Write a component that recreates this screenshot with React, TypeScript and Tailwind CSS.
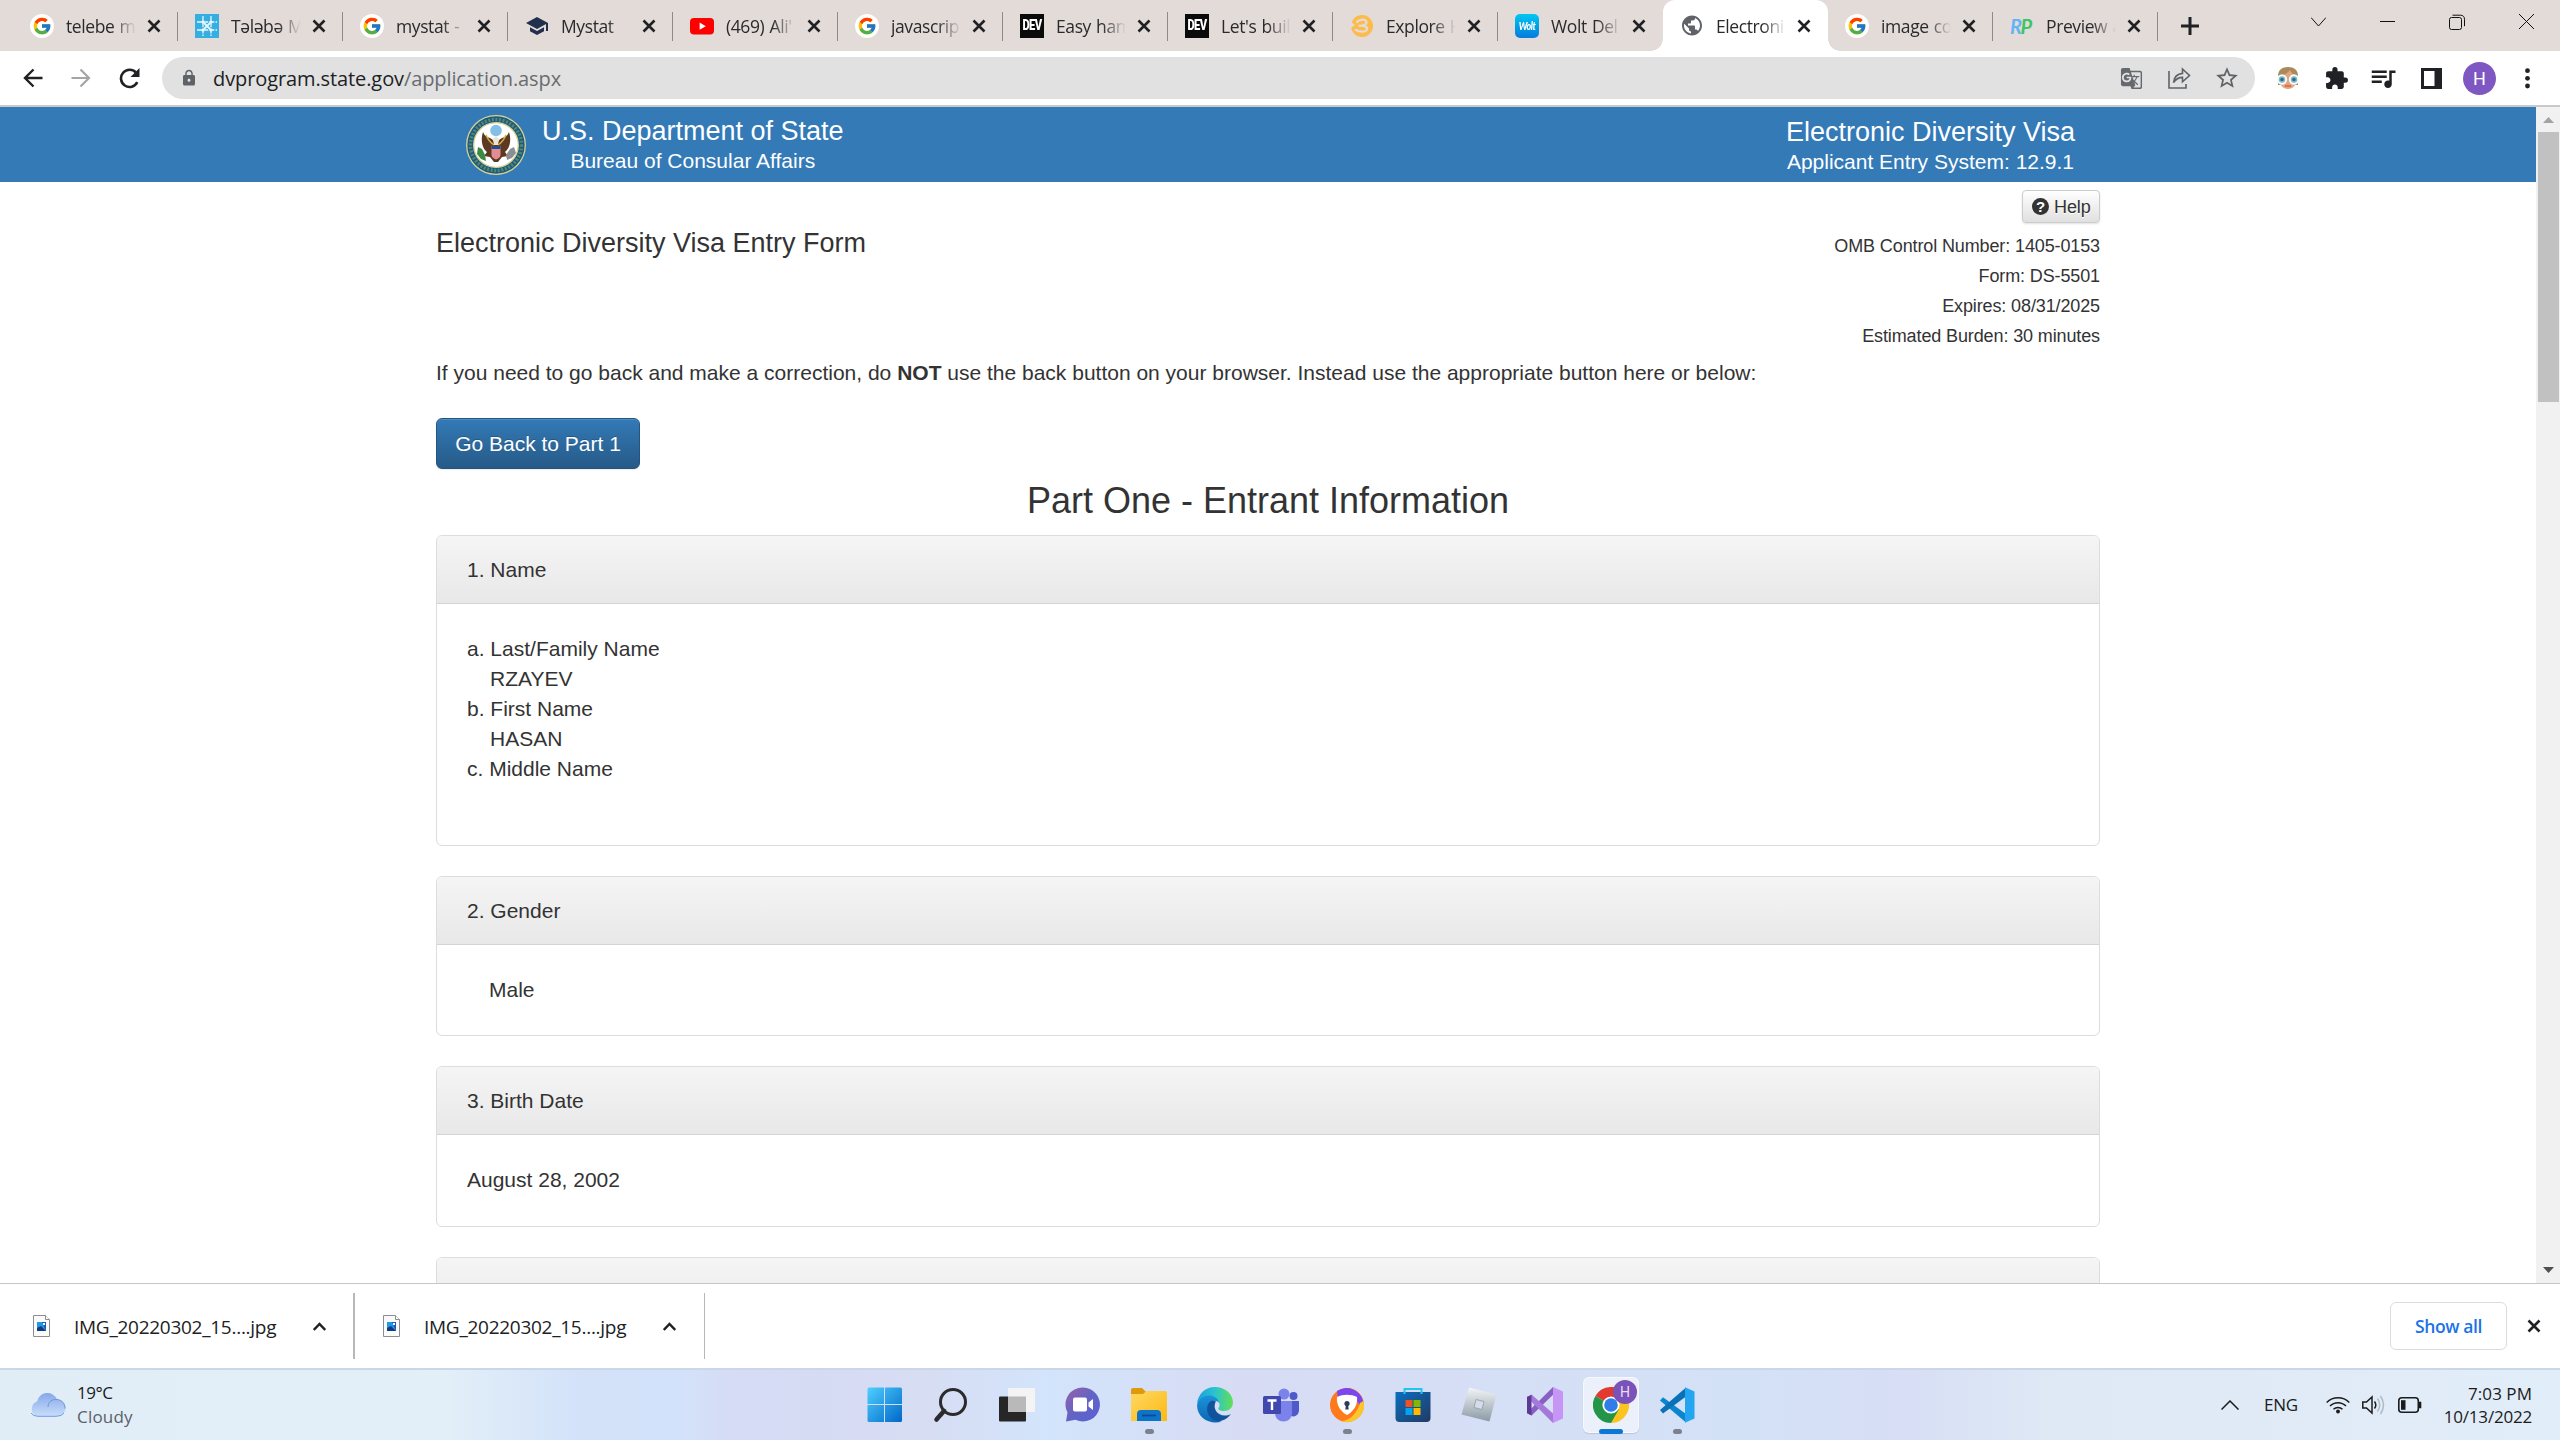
import React from "react";
import { FcGoogle } from "react-icons/fc";
import {
  MdExtension,
  MdGTranslate,
  MdLock,
  MdPublic,
  MdQueueMusic,
  MdSchool,
  MdStarBorder,
} from "react-icons/md";

const UI = "font-['Open_Sans','Noto_Sans',sans-serif]";
const ARIAL = "font-['Liberation_Sans',Arial,sans-serif]";

/* ---------- favicons ---------- */

const GoogleFav = () => (
  <span className="flex size-6 items-center justify-center rounded-full bg-white">
    <FcGoogle size={20} />
  </span>
);

const StudentFav = () => (
  <svg viewBox="0 0 24 24" className="size-6">
    <rect width="24" height="24" fill="#35aee2" />
    <g stroke="#e8f7fd" strokeWidth="1.3" fill="none">
      <path d="M8 2v20M16 2v20M2 8h20M2 16h20" strokeDasharray="5 1.2" />
      <path d="M9 9l6 6M15 9l-6 6" strokeWidth="1.8" />
    </g>
    <g fill="#e8f7fd">
      <circle cx="8" cy="8" r="1.6" />
      <circle cx="16" cy="8" r="1.6" />
      <circle cx="8" cy="16" r="1.6" />
      <circle cx="16" cy="16" r="1.6" />
    </g>
  </svg>
);

const YoutubeFav = () => (
  <svg viewBox="0 0 24 24" className="size-6">
    <rect y="4" width="24" height="16.5" rx="4" fill="#f00" />
    <path d="M9.6 8.6v7.2l6.2-3.6z" fill="#fff" />
  </svg>
);

const DevFav = () => (
  <span className="flex size-6 items-center justify-center bg-[#0a0a0a] font-['Roboto',sans-serif] text-[13px] font-black leading-6 tracking-[-0.8px] text-white">
    <span className="scale-x-[0.86] scale-y-110">DEV</span>
  </span>
);

const ExploreFav = () => (
  <svg viewBox="0 0 24 24" className="size-6">
    <circle cx="12" cy="12" r="11" fill="#fdbb4b" />
    <path
      d="M7 8c3-3.500 9-3 9.500 0 .3 2.500-3 3.800-8 3.800 6-.3 9 .7 8.500 3.400-.8 3-7 3.300-11.500.6"
      fill="none"
      stroke="#e3dbd8"
      strokeWidth="2.200"
      strokeLinecap="round"
    />
    <path d="M0 7l5 4-4 3z" fill="#e3dbd8" />
  </svg>
);

const WoltFav = () => (
  <span className="flex size-6 items-center justify-center rounded-[5px] bg-linear-to-b from-[#00c8f0] to-[#0a7bdc] font-['Lato',sans-serif] text-[9px] font-black italic leading-6 tracking-[-0.5px] text-white">
    <span className="scale-y-125">Wolt</span>
  </span>
);

const RpFav = () => (
  <span className="flex h-6 w-6 items-center font-['Lato',sans-serif] text-[20px] font-bold italic leading-6 tracking-[-1.5px]">
    <span className="text-[#62b4f5]">R</span>
    <span className="text-[#3cc468]">P</span>
  </span>
);

/* ---------- browser chrome ---------- */

const X = ({ s = 14, w = 2.6 }: { s?: number; w?: number }) => (
  <svg width={s} height={s} viewBox="0 0 14 14" className="shrink-0">
    <path d="M1.500 1.500l11 11M12.500 1.500l-11 11" stroke="#202124" strokeWidth={w} />
  </svg>
);

type TabData = { title: string; icon: React.ReactNode; active?: boolean; noSep?: boolean };

const tabs: TabData[] = [
  { title: "telebe m", icon: <GoogleFav /> },
  { title: "Tələbə M", icon: <StudentFav /> },
  { title: "mystat -", icon: <GoogleFav /> },
  { title: "Mystat", icon: <MdSchool size={24} color="#22304e" /> },
  { title: "(469) Ali'", icon: <YoutubeFav /> },
  { title: "javascrip", icon: <GoogleFav /> },
  { title: "Easy ham", icon: <DevFav /> },
  { title: "Let's buil", icon: <DevFav /> },
  { title: "Explore H", icon: <ExploreFav /> },
  { title: "Wolt Del", icon: <WoltFav />, noSep: true },
  { title: "Electroni", icon: <MdPublic size={25} color="#5f6368" />, active: true, noSep: true },
  { title: "image co", icon: <GoogleFav /> },
  { title: "Preview a", icon: <RpFav /> },
];

const Tab = ({ title, icon, active, noSep }: TabData) => (
  <div
    className={
      "relative flex h-[51px] w-[165px] shrink-0 items-center pl-[17px] pr-[17px] " +
      (active ? "rounded-t-[12px] bg-white" : "")
    }
  >
    {active && (
      <>
        <span className="absolute -left-3 bottom-0 size-3 bg-[radial-gradient(circle_at_0_0,transparent_11.5px,white_12px)]" />
        <span className="absolute -right-3 bottom-0 size-3 bg-[radial-gradient(circle_at_100%_0,transparent_11.5px,white_12px)]" />
      </>
    )}
    <span className="flex size-6 shrink-0 items-center justify-center">{icon}</span>
    <span className="ml-3 w-[70px] shrink-0 whitespace-nowrap text-[17.5px] leading-6 tracking-[-0.4px] text-[#2a2a2c] [mask-image:linear-gradient(to_right,black_66%,transparent_100%)] [word-spacing:1px]">
      {title}
    </span>
    <span className="ml-auto flex">
      <X />
    </span>
    {!noSep && <span className="absolute right-0 top-3 h-[29px] w-px bg-[#8e8a88]" />}
  </div>
);

const TabStrip = () => (
  <div className="flex h-[51px] w-full shrink-0 bg-[#e3dbd8] pl-[13px]">
    {tabs.map((t, i) => (
      <Tab key={i} {...t} />
    ))}
    <div className="flex w-16 items-center justify-center">
      <svg width="18" height="18" viewBox="0 0 18 18">
        <path d="M9 0v18M0 9h18" stroke="#202124" strokeWidth="3" />
      </svg>
    </div>
    <div className="ml-auto flex h-[43px] items-center gap-[54px] pr-[26px]">
      <svg width="15" height="10" viewBox="0 0 15 10" fill="none" stroke="#111">
        <path d="M0 .5l7.500 8.500L15 .5" />
      </svg>
      <svg width="15" height="1" viewBox="0 0 15 1">
        <path d="M0 .5h15" stroke="#111" />
      </svg>
      <svg width="16" height="16" viewBox="0 0 16 16" fill="none" stroke="#111">
        <rect x=".5" y="3.500" width="12" height="12" rx="2" />
        <path d="M3.500 1.200h8c2.500 0 4 1.500 4 4v7" />
      </svg>
      <svg width="15" height="15" viewBox="0 0 15 15" stroke="#111">
        <path d="M0 0l15 15M15 0L0 15" />
      </svg>
    </div>
  </div>
);

const ShareIcon = () => (
  <svg width="23" height="22" viewBox="0 0 23 22" fill="none" stroke="#5f6368" strokeWidth="1.600">
    <path d="M1 4v17h17v-4" />
    <path d="M5.500 15.500c.6-5 3.500-8.600 9-9.100V2l7 6.500-7 6.300v-4.400c-4 0-6.500 1.600-9 5.100z" />
  </svg>
);

const Glasses = () => (
  <svg width="24" height="22" viewBox="0 0 24 22">
    <path d="M2 9C2 3 6 0 12 0s10 3 10 9v9H2z" fill="#a98a5c" />
    <path d="M4 9c4-1 8-3 10-6 1 3 4 5 6 6v5c0 5-4 8-8 8s-8-3-8-8z" fill="#e8a27a" />
    <circle cx="6" cy="12.500" r="4.200" fill="#7cb8c4" stroke="#f2fbff" strokeWidth="2" />
    <circle cx="18" cy="12.500" r="4.200" fill="#7cb8c4" stroke="#f2fbff" strokeWidth="2" />
    <circle cx="6" cy="12.500" r="1.700" fill="#2d6a86" />
    <circle cx="18" cy="12.500" r="1.700" fill="#2d6a86" />
    <path d="M9 19h6" stroke="#b5603c" strokeWidth="1.200" />
  </svg>
);

const Toolbar = () => (
  <div className="flex h-[56px] w-full shrink-0 items-center border-b-2 border-[#c9c9c9] bg-white">
    <div className="flex w-[162px] items-center pl-[23px]">
      <svg width="20" height="20" viewBox="0 0 20 20" fill="none" stroke="#202124" strokeWidth="2.400">
        <path d="M19.500 10H2M10.500 1.500L2 10l8.500 8.500" />
      </svg>
      <svg className="ml-7" width="20" height="20" viewBox="0 0 20 20" fill="none" stroke="#a5a5a5" strokeWidth="2.200">
        <path d="M.5 10H18M9.500 1.500L18 10l-8.500 8.500" />
      </svg>
      <svg className="ml-7" width="21" height="21" viewBox="0 0 21 21">
        <path d="M18.300 14.200A8.600 8.600 0 1 1 17 4.600" fill="none" stroke="#202124" strokeWidth="2.600" />
        <path d="M20.500 0v9h-9z" fill="#202124" />
      </svg>
    </div>
    <div className="flex h-[42px] w-[2093px] items-center rounded-full bg-[#e1e1e1] pl-[18px] pr-[15px]">
      <MdLock size={18} color="#5f6368" />
      <span className="ml-[15px] whitespace-nowrap pt-px text-[20px] leading-7 tracking-[-0.1px] text-[#202124]">
        dvprogram.state.gov<span className="text-[#6a6c6f]">/application.aspx</span>
      </span>
      <div className="ml-auto flex items-center">
        <MdGTranslate size={23} color="#66696d" />
        <span className="ml-[25px]">
          <ShareIcon />
        </span>
        <MdStarBorder className="ml-[23px]" size={26} color="#5f6368" />
      </div>
    </div>
    <div className="flex items-center">
      <span className="ml-[21px]">
        <Glasses />
      </span>
      <MdExtension className="ml-6" size={25} color="#202124" />
      <MdQueueMusic className="ml-[19px]" size={30} color="#202124" />
      <svg className="ml-[23px]" width="21" height="21" viewBox="0 0 21 21">
        <rect width="21" height="21" fill="#202124" />
        <rect x="3" y="3" width="10.500" height="15" fill="#fff" />
      </svg>
      <span className="ml-[21px] flex size-[33px] items-center justify-center rounded-full bg-[#7e57c2] font-['Roboto',sans-serif] text-[18px] text-white">
        H
      </span>
      <svg className="ml-[29px]" width="5" height="21" viewBox="0 0 5 21" fill="#202124">
        <circle cx="2.500" cy="2.700" r="2.400" />
        <circle cx="2.500" cy="10.300" r="2.400" />
        <circle cx="2.500" cy="18" r="2.400" />
      </svg>
    </div>
  </div>
);

/* ---------- page ---------- */

const Seal = () => (
  <svg width="60" height="60" viewBox="0 0 60 60">
    <circle cx="30" cy="30" r="29.300" fill="#1d5a80" stroke="#d8d391" strokeWidth="1.300" />
    <circle cx="30" cy="30" r="25.500" fill="none" stroke="#55876f" strokeWidth="3.500" strokeDasharray="2 1.600" />
    <circle cx="30" cy="30" r="22.300" fill="#fff" stroke="#d8d391" strokeWidth="1.300" />
    <circle cx="30" cy="15.500" r="5.800" fill="#84bfe6" />
    <path
      d="M28 27c-1-3-4-4-7-5-2-1-3-3-4-5-2 6-2 15 4 20l-3 4 6 1 4 5h4l4-5 6-1-3-4c6-5 6-14 4-20-1 2-2 4-4 5-3 1-6 2-7 5z"
      fill="#5c3a22"
    />
    <path d="M20 20c2 5 5 8 8 10M40 20c-2 5-5 8-8 10" stroke="#d9ad45" strokeWidth="1.500" fill="none" />
    <path d="M30 21l3 3-1 6h-4l-1-6z" fill="#e8e4da" />
    <path d="M25.500 31h9v9c0 2-2 3.500-4.500 4.500-2.500-1-4.500-2.500-4.500-4.500z" fill="#e68a94" />
    <path d="M25.500 31h9v3h-9z" fill="#1f4f8f" />
    <path d="M12 32l4 2 3 6 1 6-5-2-4-5z" fill="#3a8a43" />
    <path d="M48 32l-4 2-4 6 1 5 5-2 4-5z" fill="#8b8f94" />
  </svg>
);

const PageHeader = () => (
  <div className="flex h-[75px] shrink-0 items-start justify-between bg-[#337ab7] pl-[466px] pr-[461px] pt-2 text-white">
    <div className="flex items-start">
      <Seal />
      <div className="ml-4 flex flex-col items-center pt-px">
        <span className="whitespace-nowrap text-[27px] leading-[30px]">U.S. Department of State</span>
        <span className="whitespace-nowrap text-[21px] leading-[30px]">Bureau of Consular Affairs</span>
      </div>
    </div>
    <div className="flex flex-col items-center pt-[2px]">
      <span className="whitespace-nowrap text-[27px] leading-[30px]">Electronic Diversity Visa</span>
      <span className="whitespace-nowrap text-[21px] leading-[30px]">Applicant Entry System: 12.9.1</span>
    </div>
  </div>
);

const Panel = ({ title, className, children }: { title?: string; className: string; children?: React.ReactNode }) => (
  <section className={"shrink-0 overflow-hidden rounded-[6px] border border-[#ddd] bg-white " + className}>
    <div className="h-[68px] border-b border-[#d4d4d4] bg-linear-to-b from-[#f5f5f5] to-[#e8e8e8] pl-[30px] pt-[19px] leading-[30px]">
      {title}
    </div>
    <div className="px-[30px] pt-[30px] leading-[30px]">{children}</div>
  </section>
);

const Page = () => (
  <div className={"flex h-[1176px] w-full shrink-0 overflow-hidden " + ARIAL}>
    <div className="flex w-[2536px] flex-col bg-white text-[21px] text-[#333]">
      <PageHeader />
      <main className="ml-[436px] flex w-[1664px] flex-col">
        <div className="flex h-44 shrink-0 items-start justify-between">
          <h1 className="pt-[46px] text-[27px] leading-[30px]">Electronic Diversity Visa Entry Form</h1>
          <div className="flex flex-col items-end pt-2 text-[18px] leading-[30px] tracking-[-0.12px]">
            <button className="mb-2 flex h-[33px] w-[78px] items-center rounded-[4px] border border-[#ccc] bg-linear-to-b from-white to-[#e0e0e0] pl-[9px] leading-[30px] shadow-[0_1px_2px_rgba(0,0,0,0.12)] [text-shadow:0_1px_0_#fff]">
              <span className="mr-[5px] flex size-[17px] items-center justify-center rounded-full bg-[#333] text-[15px] font-bold leading-[17px] text-white [text-shadow:none]">
                ?
              </span>
              Help
            </button>
            <span>OMB Control Number: 1405-0153</span>
            <span>Form: DS-5501</span>
            <span>Expires: 08/31/2025</span>
            <span>Estimated Burden: 30 minutes</span>
          </div>
        </div>
        <p className="shrink-0 leading-[30px]">
          If you need to go back and make a correction, do <b>NOT</b> use the back button on your browser. Instead use
          the appropriate button here or below:
        </p>
        <button className="mt-[30px] h-[51px] w-[204px] shrink-0 rounded-[6px] border border-[#245580] bg-linear-to-b from-[#337ab7] to-[#265a88] text-white shadow-[inset_0_1px_0_rgba(255,255,255,0.15),0_1px_1px_rgba(0,0,0,0.075)] [text-shadow:0_-1px_0_rgba(0,0,0,0.2)]">
          Go Back to Part 1
        </button>
        <h2 className="mt-3 shrink-0 text-center text-[36px] leading-10">Part One - Entrant Information</h2>
        <Panel title="1. Name" className="mt-[14px] h-[311px]">
          <div>a. Last/Family Name</div>
          <div className="pl-[23px]">RZAYEV</div>
          <div>b. First Name</div>
          <div className="pl-[23px]">HASAN</div>
          <div>c. Middle Name</div>
        </Panel>
        <Panel title="2. Gender" className="mt-[30px] h-[160px]">
          <div className="pl-[22px]">Male</div>
        </Panel>
        <Panel title="3. Birth Date" className="mt-[30px] h-[161px]">
          <div>August 28, 2002</div>
        </Panel>
        <Panel className="mt-[30px] h-[160px]" />
      </main>
    </div>
    <div className="flex w-6 flex-col items-center bg-[#f1f1f1]">
      <svg className="mt-[10px] shrink-0" width="11" height="6" viewBox="0 0 11 6">
        <path d="M0 6l5.500-6L11 6z" fill="#a3a3a3" />
      </svg>
      <div className="mt-[9px] h-[270px] w-[21px] shrink-0 bg-[#c1c1c1]" />
      <svg className="mb-[10px] mt-auto shrink-0" width="11" height="6" viewBox="0 0 11 6">
        <path d="M0 0l5.500 6L11 0z" fill="#505050" />
      </svg>
    </div>
  </div>
);

/* ---------- downloads ---------- */

const Download = ({ sep }: { sep: string }) => (
  <div className={"flex h-[66px] items-center border-r-[#b8b8b8] " + sep}>
    <svg className="shrink-0" width="17" height="22" viewBox="0 0 17 22">
      <path d="M.5.5h12l4 4v17H.5z" fill="#fafafa" stroke="#8d8d8d" />
      <path d="M12.500.5v4h4" fill="#fff" stroke="#8d8d8d" />
      <rect x="4" y="7" width="9" height="9" fill="#1f9ae6" />
      <path d="M4 16v-3l4-2 5 5z" fill="#133a7c" />
      <path d="M9 7h4v9z" fill="#1b58b5" />
      <rect x="10" y="8" width="2" height="2" fill="#fff" />
    </svg>
    <span className="ml-6 w-[204px] whitespace-nowrap pt-px text-[19px] leading-7 tracking-[-0.27px] text-[#202124]">
      IMG_20220302_15....jpg
    </span>
    <svg className="ml-[35px]" width="13" height="9" viewBox="0 0 13 9" fill="none" stroke="#202124" strokeWidth="2.400">
      <path d="M.8 8l5.700-6 5.700 6" />
    </svg>
  </div>
);

const Downloads = () => (
  <div className="flex h-[85px] w-full shrink-0 items-center border-t border-[#c6c6c6] bg-white">
    <Download sep="w-[355px] border-r-2 pl-[33px]" />
    <Download sep="w-[350px] border-r pl-7" />
    <button className="ml-auto h-12 w-[117px] rounded-[6px] border border-[#dadce0] text-[17.5px] font-semibold leading-7 tracking-[-0.4px] text-[#1a73e8]">
      Show all
    </button>
    <span className="ml-5 mr-[19px] flex">
      <X s={14} />
    </span>
  </div>
);

/* ---------- taskbar ---------- */

const svg = (children: React.ReactNode) => (
  <svg width="36" height="36" viewBox="0 0 36 36">
    {children}
  </svg>
);

const Icons: { el: React.ReactNode; dot?: boolean; active?: boolean }[] = [
  {
    el: svg(
      <>
        <defs>
          <linearGradient id="win" x1="0" y1="0" x2="1" y2="1">
            <stop offset="0" stopColor="#4fd0ff" />
            <stop offset="1" stopColor="#0067c8" />
          </linearGradient>
        </defs>
        <path
          d="M2 .5h15v16.500H.500V2A1.500 1.500 0 0 1 2 .5zM18 .5h15.500A1.500 1.500 0 0 1 35 2v15H18zM.5 18H17v17H2A1.500 1.500 0 0 1 .5 33.500zM18 18h17v15.500a1.500 1.500 0 0 1-1.500 1.500H18z"
          fill="url(#win)"
        />
      </>,
    ),
  },
  {
    el: svg(
      <g fill="none" stroke="#2b2b2b" strokeLinecap="round">
        <circle cx="20" cy="15" r="12.500" strokeWidth="3" />
        <path d="M11 24l-7.500 8.500" strokeWidth="4.500" />
      </g>,
    ),
  },
  {
    el: svg(
      <>
        <rect y="9.500" width="27" height="25" rx="1" fill="#262626" />
        <rect x="9" y="1" width="27" height="24" rx="1" fill="#f4f4f4" />
        <path d="M9 9.500h18V25H9z" fill="#b9b9b9" />
      </>,
    ),
  },
  {
    el: svg(
      <>
        <defs>
          <linearGradient id="chat" x1="0" y1="0" x2="1" y2="1">
            <stop offset="0" stopColor="#9a62a8" />
            <stop offset=".5" stopColor="#6264c4" />
            <stop offset="1" stopColor="#5a60d8" />
          </linearGradient>
        </defs>
        <path d="M18 .5a17 17 0 1 1-7.500 32.300L1 34.500l1.500-9A17 17 0 0 1 18 .5z" fill="url(#chat)" />
        <rect x="8" y="10.500" width="14" height="14" rx="2" fill="#fff" />
        <path d="M23.500 15.500l4.500-3.500v11l-4.500-3.500z" fill="#fff" />
      </>,
    ),
  },
  {
    dot: true,
    el: svg(
      <>
        <defs>
          <linearGradient id="fold" x1="0" y1="0" x2="1" y2="1">
            <stop offset="0" stopColor="#ffd964" />
            <stop offset="1" stopColor="#fbb912" />
          </linearGradient>
        </defs>
        <path d="M0 3a2 2 0 0 1 2-2h9l4 4-3 5H0z" fill="#e09a05" />
        <path d="M0 7h12l3.500-3H34a2 2 0 0 1 2 2v28H0z" fill="url(#fold)" />
        <path d="M6 34V27a4 4 0 0 1 4-4h16a4 4 0 0 1 4 4v7z" fill="#0d74c9" />
        <path d="M11 28.500h14" stroke="#0a4c92" strokeWidth="1.800" />
      </>,
    ),
  },
  {
    el: svg(
      <>
        <defs>
          <linearGradient id="e1" x1="0" y1=".5" x2="1" y2=".5">
            <stop offset="0" stopColor="#1aa0dc" />
            <stop offset=".5" stopColor="#2cc3cf" />
            <stop offset="1" stopColor="#62e052" />
          </linearGradient>
          <linearGradient id="e2" x1="0" y1="0" x2="0" y2="1">
            <stop offset="0" stopColor="#1c92dc" />
            <stop offset="1" stopColor="#0c67b4" />
          </linearGradient>
        </defs>
        <path d="M0 17C1 7 8 0 18 0c10 0 18 7 18 15.500 0 5-4 8.500-9 8.500-4 0-6.500-1.500-5.500-3 1.500-2 1.500-4 0-6C16 8 5 9 0 17z" fill="url(#e1)" />
        <path d="M0 18c2-7 8-10 13-9.500 5 .5 8.500 4 9 7-4-3-8.500-1-9 5-.5 6 5 14 12 14C14 38 0 32 0 18z" fill="url(#e2)" />
        <path d="M14 14c-6 4-5 14 2 18.500 6 3.500 13 1 18-5.500-6 3-13 1.500-15.500-4C17 20 17.500 16.500 19 14.500c-2-1-3.500-1-5-.5z" fill="#10529c" />
      </>,
    ),
  },
  {
    el: svg(
      <>
        <circle cx="21" cy="7" r="5.500" fill="#7b83eb" />
        <circle cx="30.500" cy="9" r="4" fill="#5059c9" />
        <path d="M25 14h11v10a6 6 0 0 1-8 5z" fill="#5059c9" />
        <path d="M12 14h17v12c0 5-4 8.500-8.500 8.500S12 31 12 26z" fill="#7b83eb" />
        <rect x="0" y="9" width="18" height="18" rx="1.500" fill="#4048b0" />
        <path d="M4.500 13.500h9M9 13.500V23" stroke="#fff" strokeWidth="2.400" />
      </>,
    ),
  },
  {
    dot: true,
    el: svg(
      <>
        <circle cx="18" cy="18" r="17" fill="#ff7a1a" />
        <path d="M8 4a17 17 0 0 1 26 10l-3 5C27 9 18 9 9 12z" fill="#7b45f0" />
        <path d="M34.500 14A17 17 0 0 1 12 34c9 0 16-8 19-18z" fill="#fbc52c" />
        <path d="M8 10c6-3 14-3 20 0 1 8-4 15-10 18C12 25 7 18 8 10z" fill="#fff" />
        <circle cx="18" cy="16.500" r="2.600" fill="#2e3a56" />
        <path d="M17 17h2l.7 5.500h-3.400z" fill="#2e3a56" />
      </>,
    ),
  },
  {
    el: svg(
      <>
        <defs>
          <linearGradient id="st" x1="0" y1="0" x2="1" y2="1">
            <stop offset="0" stopColor="#0a6fc0" />
            <stop offset="1" stopColor="#213a63" />
          </linearGradient>
        </defs>
        <path d="M.5 5h35v26a4 4 0 0 1-4 4h-27a4 4 0 0 1-4-4z" fill="url(#st)" />
        <path d="M9.500 7V2h17v5" fill="none" stroke="#22c4f4" strokeWidth="2" />
        <path d="M10.500 13h7v7h-7z" fill="#f25022" />
        <path d="M18.500 13h7v7h-7z" fill="#7fba00" />
        <path d="M10.500 21h7v7h-7z" fill="#00a4ef" />
        <path d="M18.500 21h7v7h-7z" fill="#ffb900" />
      </>,
    ),
  },
  {
    el: svg(
      <>
        <defs>
          <linearGradient id="rb" x1="0" y1="0" x2="0" y2="1">
            <stop offset="0" stopColor="#f3f5f6" />
            <stop offset="1" stopColor="#8b9aa5" />
          </linearGradient>
        </defs>
        <path d="M8 .5L35.500 7.500 28.500 34.500.500 27.500z" fill="url(#rb)" />
        <path d="M15 12.500l8 2-2 8-8-2z" fill="#d5dbe8" stroke="#8e9aa4" strokeWidth=".8" />
      </>,
    ),
  },
  {
    el: svg(
      <>
        <path d="M0 10l4.500-2 7 7.500V21l-7 7L0 26z" fill="#52338a" />
        <path d="M4 13.500l4 4.500-4 4.500z" fill="#d6dcf4" />
        <path d="M4.500 28.500L0 26 26 0l4 4z" fill="#8a5fc4" />
        <path d="M4.500 7.500L0 10l26 26 4-6z" fill="#a678dc" />
        <path d="M0 10l4.500-2v20.500L0 26z" fill="#5b3a96" />
        <path d="M26 0l10 4.500v27L26 36V26z" fill="#c695f5" />
      </>,
    ),
  },
  {
    active: true,
    el: (
      <span className="relative flex">
        {svg(
          <>
            <path d="M18 18L2.400 9A18 18 0 0 1 33.600 9z" fill="#e23a2e" />
            <path d="M18 18L33.600 9A18 18 0 0 1 18 36z" fill="#fcc41f" />
            <path d="M18 18l7.800 4.500L18 36A18 18 0 0 1 2.400 9z" fill="#239549" />
            <path d="M18 9h15.600A18 18 0 0 0 18 0z" fill="#e23a2e" />
            <circle cx="18" cy="18" r="8.600" fill="#fff" />
            <circle cx="18" cy="18" r="6.800" fill="#2f7de9" />
          </>,
        )}
        <span className="absolute -right-2 -top-[7px] flex size-6 items-center justify-center rounded-full bg-[#7a52b8] font-['Roboto',sans-serif] text-[14px] leading-6 text-[#e8dcf8]">
          H
        </span>
      </span>
    ),
  },
  {
    dot: true,
    el: svg(
      <>
        <path d="M1 13.500l3-3.200L27 27v8.500z" fill="#0a86cf" />
        <path d="M1 23l3 3.500L27 9.500V.5z" fill="#0a71b8" />
        <path d="M26 .2l9.500 4.300v27L26 35.800z" fill="#25a5f0" />
      </>,
    ),
  },
];

const Taskbar = () => (
  <div
    className={
      "flex h-[72px] w-full shrink-0 items-center border-t-2 border-[#cbd6e8] text-[17px] text-[#1b1b1b] " +
      "bg-[linear-gradient(90deg,#e0edf7_0,#e3eff8_440px,#d3e2f9_580px,#d2e2fa_680px,#d6dcf5_730px,#d6dbf4_820px,#d7ddf3_920px,#d2e4fb_1050px,#d7dcf4_1240px,#d5dff5_1500px,#d3e1f7_1750px,#d7def5_1900px,#dfe9f5_2060px,#e1edf8_2560px)]"
    }
  >
    <div className="flex w-[852px] items-center pl-[29px]">
      <svg width="37" height="24" viewBox="0 0 37 24">
        <defs>
          <linearGradient id="cl" x1="0" y1="0" x2="0" y2="1">
            <stop offset="0" stopColor="#86a8ea" />
            <stop offset="1" stopColor="#c9defa" />
          </linearGradient>
        </defs>
        <path d="M28 6.500a8.300 8.300 0 0 1 0 17H8a8 8 0 0 1 0-15 10.500 10.500 0 0 1 20-2z" fill="url(#cl)" />
        <path d="M2 20q2 3.300 7 3.300h18q6 0 8-3.300" fill="none" stroke="#6e9cec" strokeWidth="1" />
        <path d="M19 14c0-5 4-8 9-7.500 5 .5 8 4 8 9" fill="none" stroke="#6f97dc" strokeWidth="1" />
      </svg>
      <div className="ml-[11px] flex flex-col whitespace-nowrap leading-6">
        <span className="tracking-[-0.5px]">19°C</span>
        <span className="tracking-[0.2px] text-[#5b6068]">Cloudy</span>
      </div>
    </div>
    <div className="flex h-[70px]">
      {Icons.map((ic, i) => (
        <div key={i} className="relative flex h-full w-[66px] items-center justify-center">
          {ic.active && (
            <span className="absolute left-[5px] top-[7px] h-14 w-14 rounded-[6px] border border-white/60 bg-[#ebf0fb] shadow-[0_1px_1px_rgba(0,0,0,0.12)]" />
          )}
          <span className="relative flex">{ic.el}</span>
          {ic.dot && <span className="absolute bottom-[6px] h-[5px] w-[9px] rounded-full bg-[#7b828d]" />}
          {ic.active && <span className="absolute bottom-[6px] h-[5px] w-6 rounded-full bg-[#0a78d4]" />}
        </div>
      ))}
    </div>
    <div className="ml-auto flex items-center pr-7">
      <svg width="18" height="10" viewBox="0 0 18 10" fill="none" stroke="#1b1b1b" strokeWidth="1.500">
        <path d="M.5 9.500L9 1l8.500 8.500" />
      </svg>
      <span className="ml-[25px] w-[35px] whitespace-nowrap tracking-[-0.3px]">ENG</span>
      <svg className="ml-[27px]" width="24" height="18" viewBox="0 0 24 18" fill="none" stroke="#1b1b1b" strokeWidth="1.500">
        <path d="M.7 6.500a16 16 0 0 1 22.600 0M4 10a11.300 11.300 0 0 1 16 0M7.500 13.200a6.500 6.500 0 0 1 9 0" />
        <circle cx="12" cy="15.500" r="1.900" fill="#1b1b1b" stroke="none" />
      </svg>
      <svg className="ml-3" width="24" height="20" viewBox="0 0 24 20" fill="none" stroke="#1b1b1b" strokeWidth="1.500">
        <path d="M.8 7h3.700L10 2v16l-5.500-5H.8zM12.500 6.500q2.600 3.500 0 7" />
        <path d="M15.500 3.500q4.500 6.500 0 13M18.500 1q6 9 0 18" stroke="#b0bac6" />
      </svg>
      <svg className="ml-3" width="24" height="16" viewBox="0 0 24 16" fill="none" stroke="#1b1b1b" strokeWidth="1.600">
        <rect x=".8" y=".8" width="19.500" height="14.400" rx="3" />
        <rect x="3" y="3.200" width="4.500" height="9.600" fill="#1b1b1b" stroke="none" />
        <path d="M21 5.500h1.500v5H21" fill="#1b1b1b" />
      </svg>
      <div className="ml-5 flex w-[90px] flex-col items-end whitespace-nowrap leading-[23px]">
        <span className="tracking-[0.05px]">7:03 PM</span>
        <span className="tracking-[-0.2px]">10/13/2022</span>
      </div>
    </div>
  </div>
);

export default function App() {
  return (
    <div className={"flex h-[1440px] w-[2560px] flex-col overflow-hidden bg-white " + UI}>
      <TabStrip />
      <Toolbar />
      <Page />
      <Downloads />
      <Taskbar />
    </div>
  );
}
